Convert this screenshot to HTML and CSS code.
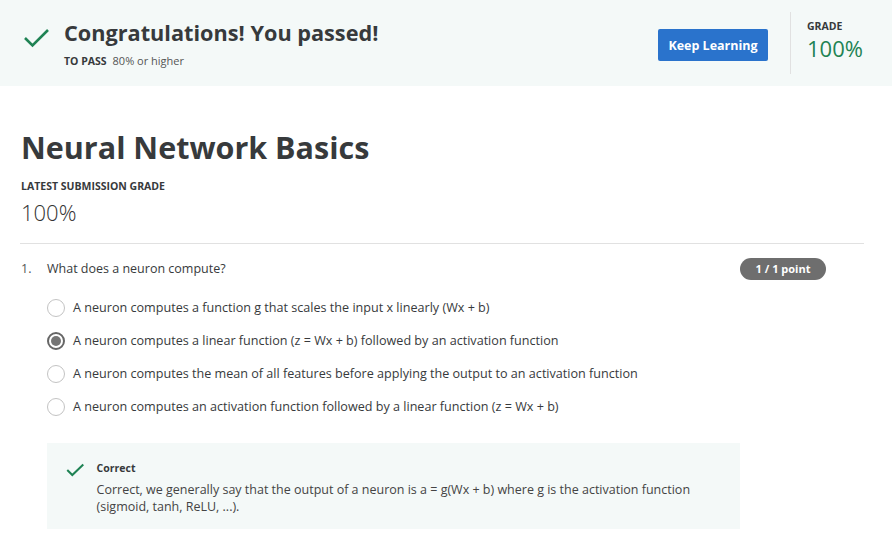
FILE: index.html
```html
<!DOCTYPE html>
<html>
<head>
<meta charset="utf-8">
<link rel="stylesheet" href="styles.css">
</head>
<body>
<header class="banner">
  <div class="banner-main">
    <svg class="banner-check" width="25" height="20" viewBox="0 0 25 20"><path d="M1 10 L8.5 17.5 L24 2" fill="none" stroke="#1f8354" stroke-width="2.6"/></svg>
    <div class="banner-text">
      <h1 class="banner-title">Congratulations! You passed!</h1>
      <div class="banner-sub"><span class="label">TO PASS</span><span class="sub-value">80% or higher</span></div>
    </div>
  </div>
  <button class="btn-primary">Keep Learning</button>
  <div class="grade-box">
    <div class="label">GRADE</div>
    <div class="grade-value">100%</div>
  </div>
</header>
<main class="content">
  <h2 class="quiz-title">Neural Network Basics</h2>
  <div class="label latest">LATEST SUBMISSION GRADE</div>
  <div class="latest-value">100%</div>
  <hr class="divider">
  <section class="question">
    <div class="q-head">
      <span class="q-num">1.</span>
      <span class="q-text">What does a neuron compute?</span>
      <span class="badge">1 / 1 point</span>
    </div>
    <ul class="options">
      <li class="option"><span class="radio"></span>A neuron computes a function g that scales the input x linearly (Wx + b)</li>
      <li class="option"><span class="radio checked"></span>A neuron computes a linear function (z = Wx + b) followed by an activation function</li>
      <li class="option"><span class="radio"></span>A neuron computes the mean of all features before applying the output to an activation function</li>
      <li class="option"><span class="radio"></span>A neuron computes an activation function followed by a linear function (z = Wx + b)</li>
    </ul>
    <div class="feedback">
      <svg class="fb-check" width="22" height="16" viewBox="0 0 22 16"><path d="M1.5 8 L7.5 14 L20.5 1.5" fill="none" stroke="#1f8354" stroke-width="2.4"/></svg>
      <div class="fb-body">
        <div class="fb-title">Correct</div>
        <div class="fb-text">Correct, we generally say that the output of a neuron is a = g(Wx + b) where g is the activation function (sigmoid, tanh, ReLU, ...).</div>
      </div>
    </div>
  </section>
</main>
</body>
</html>
```

FILE: styles.css
```css
* { box-sizing: border-box; }
body {
  margin: 0;
  font-family: "Open Sans", "Noto Sans", sans-serif;
  color: #373a3c;
  background: #fff;
}
.banner {
  height: 86px;
  background: #f4f9f8;
  display: flex;
  align-items: center;
  padding: 0 29px 0 24px;
}
.banner-main {
  flex: 1;
  display: flex;
  align-items: flex-start;
  gap: 15px;
  padding-top: 1px;
}
.banner-check { margin-top: 9px; }
.banner-title {
  margin: 0;
  font-size: 21.7px;
  font-weight: 700;
  line-height: 28px;
  color: #373a3c;
}
.banner-sub { margin-top: 7px; font-size: 11px; line-height: 14px; }
.label {
  font-size: 10.5px;
  font-weight: 700;
  color: #373a3c;
}
.sub-value { margin-left: 6px; color: #555; }
.btn-primary {
  width: 110px;
  height: 32px;
  border: none;
  border-radius: 2px;
  background: #2a73cc;
  color: #fff;
  font-family: "Open Sans", sans-serif;
  font-size: 12.5px;
  font-weight: 700;
  margin-right: 22px;
  margin-top: 4px;
}
.grade-box {
  align-self: flex-start;
  margin-top: 12px;
  height: 62px;
  border-left: 1px solid #e1e1e1;
  padding: 7px 0 0 16px;
  width: 73px;
}
.grade-box .label { line-height: 14px; }
.grade-value {
  font-size: 22px;
  line-height: 26px;
  color: #1f8354;
  margin-top: 2px;
}
.content {
  padding: 41px 28px 0 20px;
}
.quiz-title {
  margin: 0 0 0 1px;
  font-size: 30.5px;
  font-weight: 700;
  line-height: 40px;
  color: #373a3c;
}
.latest { margin: 12px 0 0 1px; line-height: 14px; }
.latest-value {
  margin: 6px 0 0 1px;
  font-size: 22px;
  font-weight: 300;
  line-height: 26px;
  color: #333;
}
.divider {
  margin: 18px 0 0 0;
  border: none;
  border-top: 1px solid #e1e1e1;
}
.question { padding-top: 14px; }
.q-head {
  display: flex;
  align-items: center;
  font-size: 12.5px;
  line-height: 22px;
  margin-right: 38px;
}
.q-num { width: 27px; padding-left: 1px; color: #555; }
.q-text { flex: 1; color: #373a3c; }
.badge {
  background: #6e6e6e;
  color: #fff;
  font-size: 11px;
  font-weight: 700;
  border-radius: 11px;
  height: 22px;
  line-height: 22px;
  width: 86px;
  text-align: center;
}
.options {
  list-style: none;
  margin: 11px 0 0 27px;
  padding: 0;
}
.option {
  display: flex;
  align-items: center;
  height: 33px;
  font-size: 12.6px;
  color: #373a3c;
}
.radio {
  width: 18px;
  height: 18px;
  border: 1.5px solid #c3c3c3;
  border-radius: 50%;
  margin-right: 8px;
  display: flex;
  align-items: center;
  justify-content: center;
  background: #fff;
}
.radio.checked { border: 2px solid #666; }
.radio.checked::after {
  content: "";
  width: 10px;
  height: 10px;
  border-radius: 50%;
  background: #757575;
}
.feedback {
  margin: 20px 0 0 27px;
  width: 693px;
  height: 86px;
  background: #f4f9f8;
  display: flex;
  align-items: flex-start;
  padding: 18px 20px 0 19px;
  gap: 12px;
}
.fb-check { margin-top: 1px; }
.fb-title { font-size: 10.5px; font-weight: 700; line-height: 14px; color: #373a3c; }
.fb-text { font-size: 12.5px; line-height: 17px; margin-top: 6px; color: #444; }
```
